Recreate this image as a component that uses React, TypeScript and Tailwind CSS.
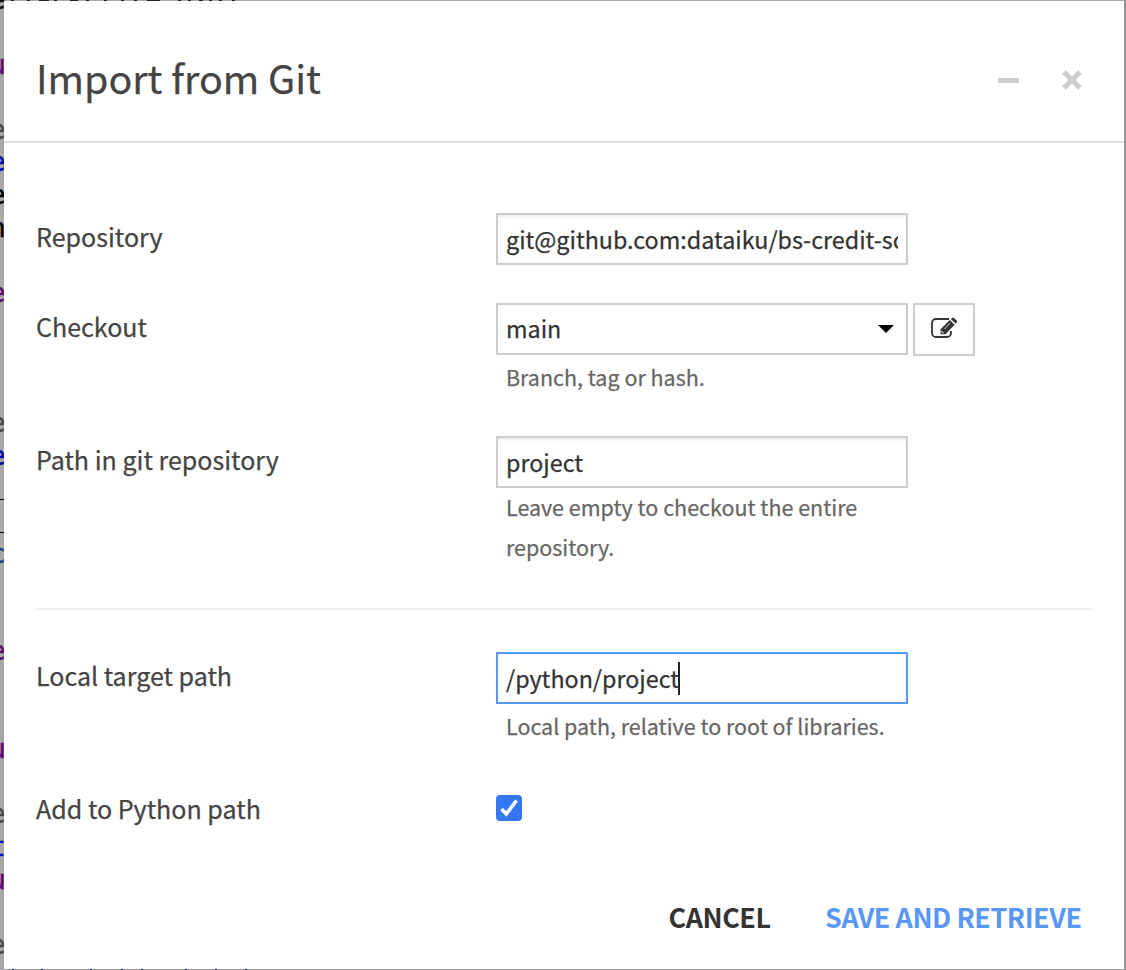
import type { ReactNode } from "react";

const codeFragments = [
  { y: -16, ch: "e", color: "text-[#111]" },
  { y: 49, ch: "u", color: "text-[#5b1070]" },
  { y: 114, ch: "e", color: "text-[#4a4a48]" },
  { y: 146, ch: "e", color: "text-[#0808b0]" },
  { y: 179, ch: "e", color: "text-black" },
  { y: 212, ch: "n", color: "text-black" },
  { y: 277, ch: "e", color: "text-[#5b1070]" },
  { y: 407, ch: "e", color: "text-[#4a4a48]" },
  { y: 440, ch: "e", color: "text-[#0808b0]" },
  { y: 538, ch: "c", color: "text-[#1c4480]" },
  { y: 635, ch: "e", color: "text-[#5b1070]" },
  { y: 733, ch: "u", color: "text-[#5b1070]" },
  { y: 798, ch: "e", color: "text-[#4a4a48]" },
  { y: 831, ch: "t", color: "text-[#0808b0]" },
  { y: 864, ch: "u", color: "text-[#5b1070]" },
  { y: 929, ch: "e", color: "text-[#4a4a48]" },
];

const topMarks: [number, number][] = [
  [11, 3], [27, 3], [39, 10], [54, 3], [70, 8], [86, 3], [104, 3], [121, 3],
  [134, 3], [147, 13], [178, 3], [188, 3], [199, 4], [209, 3], [219, 3], [232, 3],
];
const bottomMarks = [12, 41, 90, 121, 141, 185, 215, 245];

function Backdrop() {
  return (
    <div className="absolute inset-0 overflow-hidden bg-[#a9a8a7]" aria-hidden="true">
      {codeFragments.map((f) => (
        <span
          key={f.y}
          className={`absolute left-[-10px] font-['DejaVu_Sans_Mono'] text-[26px] leading-[33px] [-webkit-text-stroke:0.5px] ${f.color}`}
          style={{ top: f.y }}
        >
          {f.ch}
        </span>
      ))}
      <div className="absolute left-0 top-[499px] h-px w-1 bg-black" />
      <div className="absolute left-0 top-[532px] h-px w-1 bg-black" />
      {topMarks.map(([x, w]) => (
        <div key={x} className="absolute top-0 h-px bg-[#222]" style={{ left: x, width: w }} />
      ))}
      <div className="absolute inset-x-1 bottom-0 h-px bg-[#979797]" />
      {bottomMarks.map((x) => (
        <div key={x} className="absolute bottom-0 h-px w-[2px] bg-[#0c0c70]" style={{ left: x }} />
      ))}
      <div className="absolute inset-y-0 right-0 w-[2px] bg-[#979797]" />
    </div>
  );
}

function Row({ label, className, children }: { label: string; className: string; children: ReactNode }) {
  return (
    <div className={`flex ${className}`}>
      <label className="w-[460px] shrink-0 pt-[3px] text-[25.05px] leading-[40px] text-[#444]">{label}</label>
      <div className="w-[480px]">{children}</div>
    </div>
  );
}

const field =
  "flex h-[52px] w-[412px] items-center overflow-hidden border-2 bg-white px-2 text-[23.3px] leading-[40px] text-[#333] whitespace-nowrap";
const help = "w-[400px] pl-[10px] text-[21.47px] leading-[40px] text-[#666]";

export default function App() {
  return (
    <div className="relative h-[970px] w-[1126px] overflow-hidden bg-[#999] font-['Noto_Sans_CJK_SC',sans-serif]">
      <Backdrop />
      <div className="relative ml-1 mt-px flex h-[968px] w-[1120px] flex-col bg-white [-webkit-text-stroke:0.25px]">
        <header className="flex h-[142px] shrink-0 items-center justify-between border-b-2 border-[#ddd] pl-8 pr-[42px]">
          <h1 className="pt-[12px] text-[39.4px] leading-[60px] text-[#444]">Import from Git</h1>
          <div className="flex items-center gap-[43.5px] pt-[18px]">
            <button aria-label="Minimize" className="mt-px h-[5px] w-[21px] bg-[#ccc]" />
            <button aria-label="Close">
              <svg width="20" height="20" viewBox="0 0 20 20" className="block">
                <path d="M2 2 18 18M18 2 2 18" stroke="#ccc" strokeWidth="5" />
              </svg>
            </button>
          </div>
        </header>

        <main className="flex flex-col px-8 pt-[70px]">
          <Row label="Repository" className="h-[90px]">
            <div className={`${field} border-[#ccc] shadow-[inset_0_2px_2px_rgba(0,0,0,0.075)]`}>
              <div className="w-full overflow-hidden">git@github.com:dataiku/bs-credit-scoring</div>
            </div>
          </Row>
          <Row label="Checkout" className="h-[133px]">
            <div className="flex gap-[5px]">
              <div className={`${field} justify-between border-[#ccc] pb-[2px]`}>
                <span>main</span>
                <svg width="16" height="8" viewBox="0 0 16 8" className="mr-1 mt-[2px]">
                  <path d="M0 0h16L8 8z" fill="#000" />
                </svg>
              </div>
              <button aria-label="Edit" className="flex h-[53px] w-[62px] items-center justify-center border-2 border-[#ccc]">
                <svg width="26" height="22" viewBox="0 0 26 22" className="mb-[3px]">
                  <path d="M18 2H5A4 4 0 0 0 1 6v10a4 4 0 0 0 4 4h11a4 4 0 0 0 4-4v-2" fill="none" stroke="#333" strokeWidth="1.800" />
                  <path d="m18.800 3 4.800 4.800L14.400 17.200H9.600v-4.900z" fill="#333" />
                  <path d="m20 2 1-1a1.400 1.400 0 0 1 2 0l2.600 2.600a1.400 1.400 0 0 1 0 2l-1 1z" fill="#333" />
                  <path d="m13.500 12 5.500-5.700M10.800 14v1h1v1h1" fill="none" stroke="#fff" strokeWidth="0.800" />
                </svg>
              </button>
            </div>
            <div className={`${help} pt-px`}>Branch, tag or hash.</div>
          </Row>
          <Row label="Path in git repository" className="h-[172px]">
            <div className={`${field} border-[#ccc] shadow-[inset_0_2px_2px_rgba(0,0,0,0.075)]`}>project</div>
            <div className={`${help} -mt-px`}>Leave empty to checkout the entire<br />repository.</div>
          </Row>
          <div className="h-[2px] bg-[#eee]" />
          <Row label="Local target path" className="mt-[42px] h-[133px]">
            <div className={`${field} border-[#5897f6]`}>
              <span>/python/project</span>
              <span className="-ml-px h-[33px] w-[2px] bg-[#222]" />
            </div>
            <div className={`${help} pt-[2px]`}>Local path, relative to root of libraries.</div>
          </Row>
          <Row label="Add to Python path" className="h-[90px]">
            <div role="checkbox" aria-checked="true" className="mt-[10px] flex h-[26px] w-[26px] items-center justify-center rounded-[4px] bg-[#3377f6]">
              <svg width="26" height="26" viewBox="0 0 26 26">
                <path d="m5.500 14 4.800 5L20.500 5.500" fill="none" stroke="#fff" strokeWidth="3.600" />
              </svg>
            </div>
          </Row>
        </main>

        <footer className="flex justify-end gap-[54.500px] pr-[42.500px] pt-[22px] text-[26.900px] font-bold leading-[40px] tracking-[-0.45px] [-webkit-text-stroke:0]">
          <button className="text-[#333]">CANCEL</button>
          <button className="text-[#5897f6]">SAVE AND RETRIEVE</button>
        </footer>
      </div>
    </div>
  );
}
